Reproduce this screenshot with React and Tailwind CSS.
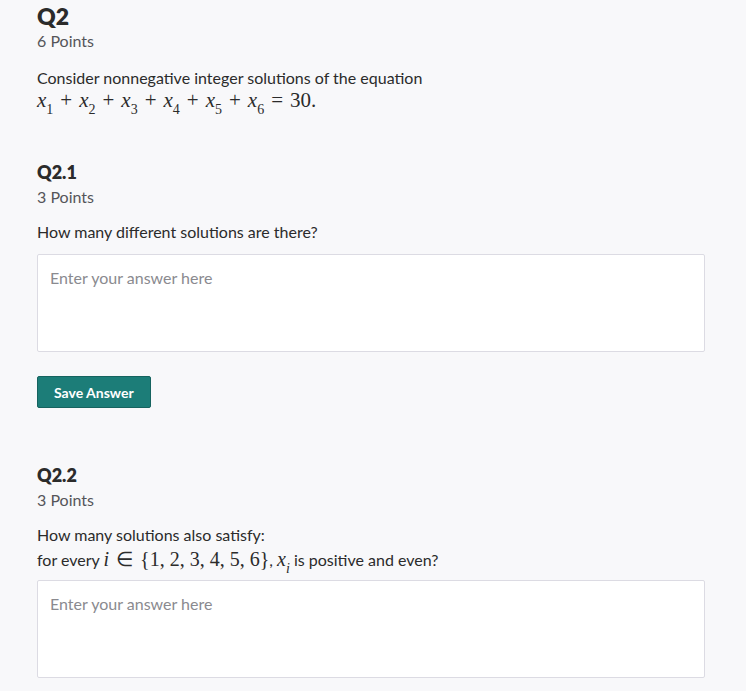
const Sub = ({ children }) => (
  <sub className="text-[14px] not-italic" style={{ verticalAlign: '-3px', lineHeight: 0 }}>{children}</sub>
);

const Math = ({ children, className = '' }) => (
  <span className={`font-['Liberation_Serif',serif] ${className}`}>{children}</span>
);

const V = ({ children }) => <span className="italic">{children}</span>;
const Op = ({ children }) => <span className="mx-[7px]">{children}</span>;

const Answer = ({ top = 'mt-[11px]' }) => (
  <div className={`${top} h-[98px] bg-white border border-[#dcdbe3] rounded-[2px] px-[12px] pt-[12px] text-[16px] leading-[22px] text-[#8a8a8f]`}>
    Enter your answer here
  </div>
);

const Header = ({ title, points, big }) => (
  <div>
    <h2 className={`font-extrabold text-[#2b2b2b] ${big ? 'text-[23px] leading-[28px]' : 'text-[18px] leading-[24px]'}`}>{title}</h2>
    <p className={`text-[16px] leading-[20px] text-[#555559] ${big ? 'mt-[1px]' : 'mt-[3px]'}`}>{points}</p>
  </div>
);

export default function App() {
  return (
    <div className="min-h-[691px] bg-[#f8f8fa] font-['Lato',sans-serif] pl-[37px] pr-[41px] pt-[2px] text-[#2b2b2b]">
      <Header title="Q2" points="6 Points" big />
      <div className="mt-[16px] text-[16px] leading-[22px]">
        <p>Consider nonnegative integer solutions of the equation</p>
        <p>
          <Math className="text-[21px]">
            <V>x</V><Sub>1</Sub><Op>+</Op><V>x</V><Sub>2</Sub><Op>+</Op><V>x</V><Sub>3</Sub><Op>+</Op><V>x</V><Sub>4</Sub><Op>+</Op><V>x</V><Sub>5</Sub><Op>+</Op><V>x</V><Sub>6</Sub><Op>=</Op>30.
          </Math>
        </p>
      </div>

      <section className="mt-[48px]">
        <Header title="Q2.1" points="3 Points" />
        <p className="mt-[14px] text-[16px] leading-[22px]">How many different solutions are there?</p>
        <Answer />
        <button className="mt-[24px] h-[32px] px-[16px] bg-[#1c7d78] border border-[#16635f] rounded-[2px] text-white text-[14px] font-bold">
          Save Answer
        </button>
      </section>

      <section className="mt-[55px]">
        <Header title="Q2.2" points="3 Points" />
        <div className="mt-[13px] text-[16px] leading-[24px]">
          <p>How many solutions also satisfy:</p>
          <p>
            for every <Math className="text-[20px]"><V>i</V> <span className="mx-[2px]">∈</span> {'{'}1, 2, 3, 4, 5, 6{'}'}</Math>, <Math className="text-[20px]"><V>x</V><Sub><V>i</V></Sub></Math> is positive and even?
          </p>
        </div>
        <Answer top="mt-[8px]" />
      </section>
    </div>
  );
}
